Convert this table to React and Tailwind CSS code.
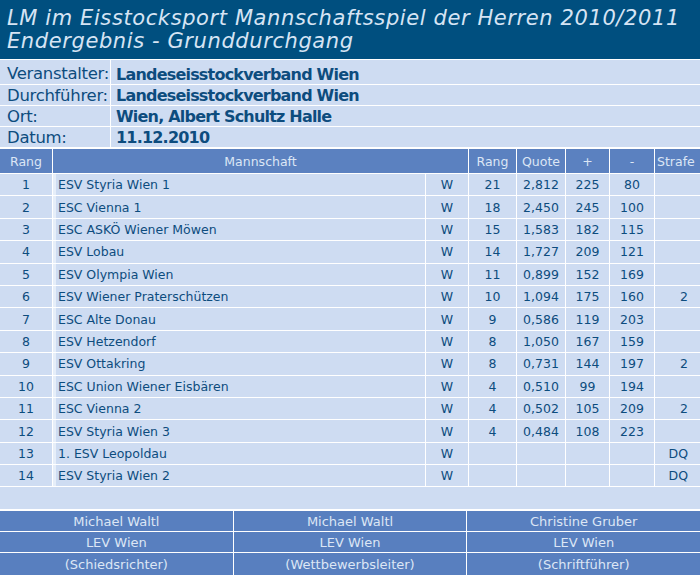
import React from 'react';

const info = [
  ['Veranstalter:', 'Landeseisstockverband Wien', 'h-[24px] pt-[5px]'],
  ['Durchführer:', 'Landeseisstockverband Wien', 'h-[20px] pt-[2px]'],
  ['Ort:', 'Wien, Albert Schultz Halle', 'h-[20px] pt-[2px]'],
  ['Datum:', '11.12.2010', 'h-[20px] pt-[2px]'],
];

const rows = [
  [1, 'ESV Styria Wien 1', 21, '2,812', 225, 80, ''],
  [2, 'ESC Vienna 1', 18, '2,450', 245, 100, ''],
  [3, 'ESC ASKÖ Wiener Möwen', 15, '1,583', 182, 115, ''],
  [4, 'ESV Lobau', 14, '1,727', 209, 121, ''],
  [5, 'ESV Olympia Wien', 11, '0,899', 152, 169, ''],
  [6, 'ESV Wiener Praterschützen', 10, '1,094', 175, 160, '2'],
  [7, 'ESC Alte Donau', 9, '0,586', 119, 203, ''],
  [8, 'ESV Hetzendorf', 8, '1,050', 167, 159, ''],
  [9, 'ESV Ottakring', 8, '0,731', 144, 197, '2'],
  [10, 'ESC Union Wiener Eisbären', 4, '0,510', 99, 194, ''],
  [11, 'ESC Vienna 2', 4, '0,502', 105, 209, '2'],
  [12, 'ESV Styria Wien 3', 4, '0,484', 108, 223, ''],
  [13, '1. ESV Leopoldau', '', '', '', '', 'DQ'],
  [14, 'ESV Styria Wien 2', '', '', '', '', 'DQ'],
];

const footer = [
  ['Michael Waltl', 'Michael Waltl', 'Christine Gruber'],
  ['LEV Wien', 'LEV Wien', 'LEV Wien'],
  ['(Schiedsrichter)', '(Wettbewerbsleiter)', '(Schriftführer)'],
];

export default function App() {
  return (
    <div className="w-[700px] h-[577px] bg-white flex flex-col gap-px font-['DejaVu_Sans',sans-serif] overflow-hidden">
      <div className="h-[59px] shrink-0 bg-[#004f7f] px-[7px] pt-[7px] text-[#d6e4f4] italic text-[21px] leading-[23px] tracking-[0.6px]">
        <div>LM im Eisstocksport Mannschaftsspiel der Herren 2010/2011</div>
        <div>Endergebnis - Grunddurchgang</div>
      </div>

      {info.map(([k, v, h]) => (
        <div key={k} className="flex gap-px text-[#0d4c7e] tracking-[-0.3px]">
          <div className={`${h} w-[110px] bg-[#cedcf2] pl-[7px] flex items-center text-[16.5px]`}>{k}</div>
          <div className={`${h} flex-1 bg-[#cedcf2] pl-[5px] flex items-center font-bold text-[16px] tracking-[-0.8px]`}>{v}</div>
        </div>
      ))}

      <div className="mt-px h-[24px] shrink-0 flex gap-px text-[#dce6f5] text-[12.5px]">
        <div className="w-[52px] bg-[#5b81c0] flex items-center justify-center pt-[2px]">Rang</div>
        <div className="w-[415px] bg-[#5b81c0] flex items-center justify-center pt-[2px]">Mannschaft</div>
        <div className="w-[47px] bg-[#5b81c0] flex items-center justify-center pt-[2px]">Rang</div>
        <div className="w-[48px] bg-[#5b81c0] flex items-center justify-center pt-[2px]">Quote</div>
        <div className="w-[43px] bg-[#5b81c0] flex items-center justify-center pt-[2px]">+</div>
        <div className="w-[44px] bg-[#5b81c0] flex items-center justify-center pt-[2px]">-</div>
        <div className="flex-1 bg-[#5b81c0] flex items-center pl-[2px] pt-[2px]">Strafe</div>
      </div>

      {rows.map(([r, team, rang, quote, plus, minus, strafe]) => (
        <div key={r} className="h-[21.4px] shrink-0 flex gap-px text-[#0d4c7e] text-[12.5px]">
          <div className="w-[52px] bg-[#cedcf2] flex items-center justify-center pt-[2px]">{r}</div>
          <div className="w-[372px] bg-[#cedcf2] border-l-[3px] border-[#e6eef9] pl-[2px] pt-[2px] flex items-center">{team}</div>
          <div className="w-[42px] bg-[#cedcf2] flex items-center justify-center pt-[2px]">W</div>
          <div className="w-[47px] bg-[#cedcf2] flex items-center justify-center pt-[2px]">{rang}</div>
          <div className="w-[48px] bg-[#cedcf2] flex items-center justify-center pt-[2px]">{quote}</div>
          <div className="w-[43px] bg-[#cedcf2] flex items-center justify-center pt-[2px]">{plus}</div>
          <div className="w-[44px] bg-[#cedcf2] flex items-center justify-center pt-[2px]">{minus}</div>
          <div className="flex-1 bg-[#cedcf2] flex items-center justify-end pr-[12px] pt-[2px]">{strafe}</div>
        </div>
      ))}

      <div className="h-[22px] shrink-0 bg-[#cedcf2]" />

      <div className="mt-px flex flex-col gap-px">
        {footer.map((line, i) => (
          <div key={i} className={`${i === 2 ? 'h-[22px]' : 'h-[20px]'} shrink-0 flex gap-px text-[#dce6f5] text-[13px]`}>
            {line.map((t, j) => (
              <div key={j} className="flex-1 bg-[#587fbf] flex items-center justify-center pt-[1px]">{t}</div>
            ))}
          </div>
        ))}
      </div>
    </div>
  );
}
